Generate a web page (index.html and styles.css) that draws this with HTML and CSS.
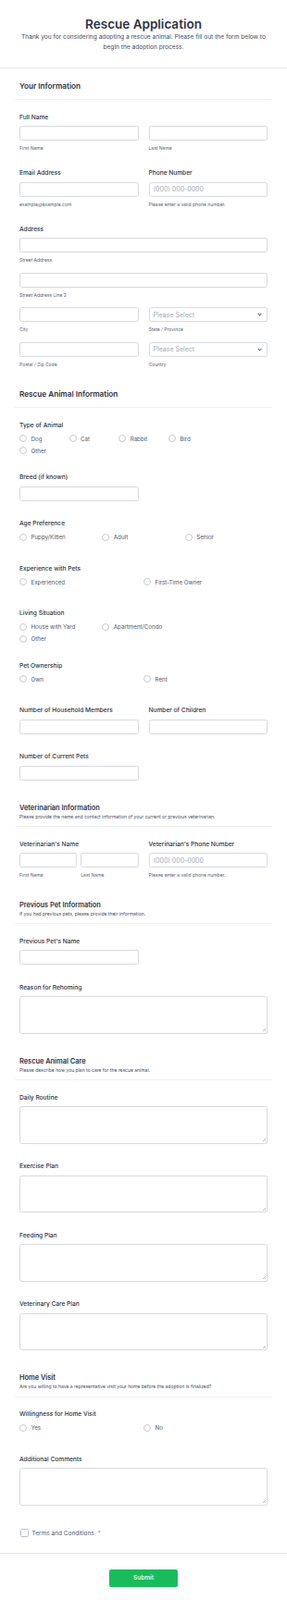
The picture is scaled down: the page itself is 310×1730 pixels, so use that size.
FILE: index.html
```html
<!DOCTYPE html>
<html lang="en">
<head>
    <meta charset="UTF-8">
    <meta name="viewport" content="width=device-width, initial-scale=1.0">
    <title>Rescue Application</title>
    <link rel="stylesheet" href="styles.css">
</head>
<body>

    <header class="form-header">
        <h1>Rescue Application</h1>
        <p>Thank you for considering adopting a rescue animal. Please fill out the form below to begin the adoption process.</p>
    </header>

    <form class="form" id="rescueForm">

        <!-- Your Information -->
        <div class="section-head first">
            <h2>Your Information</h2>
        </div>

        <div class="field with-sub">
            <label class="label">Full Name</label>
            <div class="pair">
                <div><input type="text"><span class="sub">First Name</span></div>
                <div><input type="text"><span class="sub">Last Name</span></div>
            </div>
        </div>

        <div class="field with-sub pair">
            <div>
                <label class="label">Email Address</label>
                <input type="email">
                <span class="sub">example@example.com</span>
            </div>
            <div>
                <label class="label">Phone Number</label>
                <input type="tel" placeholder="(000) 000-0000">
                <span class="sub">Please enter a valid phone number.</span>
            </div>
        </div>

        <div class="field with-sub">
            <label class="label">Address</label>
            <div class="part">
                <input type="text"><span class="sub">Street Address</span>
            </div>
            <div class="part">
                <input type="text"><span class="sub">Street Address Line 2</span>
            </div>
            <div class="part pair">
                <div><input type="text"><span class="sub">City</span></div>
                <div>
                    <div class="select-wrap">
                        <select><option value="">Please Select</option></select>
                    </div>
                    <span class="sub">State / Province</span>
                </div>
            </div>
            <div class="part pair">
                <div><input type="text"><span class="sub">Postal / Zip Code</span></div>
                <div>
                    <div class="select-wrap">
                        <select><option value="">Please Select</option></select>
                    </div>
                    <span class="sub">Country</span>
                </div>
            </div>
        </div>

        <!-- Rescue Animal Information -->
        <div class="section-head">
            <h2>Rescue Animal Information</h2>
        </div>

        <div class="field choice two-rows">
            <label class="label">Type of Animal</label>
            <div class="choices cols-4">
                <label class="opt"><input type="radio" name="animal">Dog</label>
                <label class="opt"><input type="radio" name="animal">Cat</label>
                <label class="opt"><input type="radio" name="animal">Rabbit</label>
                <label class="opt"><input type="radio" name="animal">Bird</label>
                <label class="opt"><input type="radio" name="animal">Other</label>
            </div>
        </div>

        <div class="field">
            <label class="label">Breed (if known)</label>
            <input type="text" class="half">
        </div>

        <div class="field choice">
            <label class="label">Age Preference</label>
            <div class="choices cols-3">
                <label class="opt"><input type="radio" name="age">Puppy/Kitten</label>
                <label class="opt"><input type="radio" name="age">Adult</label>
                <label class="opt"><input type="radio" name="age">Senior</label>
            </div>
        </div>

        <div class="field choice">
            <label class="label">Experience with Pets</label>
            <div class="choices cols-2">
                <label class="opt"><input type="radio" name="experience">Experienced</label>
                <label class="opt"><input type="radio" name="experience">First-Time Owner</label>
            </div>
        </div>

        <div class="field choice two-rows">
            <label class="label">Living Situation</label>
            <div class="choices cols-3">
                <label class="opt"><input type="radio" name="living">House with Yard</label>
                <label class="opt"><input type="radio" name="living">Apartment/Condo</label>
                <label class="opt new-row"><input type="radio" name="living">Other</label>
            </div>
        </div>

        <div class="field choice">
            <label class="label">Pet Ownership</label>
            <div class="choices cols-2">
                <label class="opt"><input type="radio" name="ownership">Own</label>
                <label class="opt"><input type="radio" name="ownership">Rent</label>
            </div>
        </div>

        <div class="field pair">
            <div>
                <label class="label">Number of Household Members</label>
                <input type="number">
            </div>
            <div>
                <label class="label">Number of Children</label>
                <input type="number">
            </div>
        </div>

        <div class="field">
            <label class="label">Number of Current Pets</label>
            <input type="number" class="half">
        </div>

        <!-- Veterinarian Information -->
        <div class="section-head with-desc">
            <h2>Veterinarian Information</h2>
            <p class="desc">Please provide the name and contact information of your current or previous veterinarian.</p>
        </div>

        <div class="field with-sub pair">
            <div>
                <label class="label">Veterinarian's Name</label>
                <div class="name-pair">
                    <div><input type="text"><span class="sub">First Name</span></div>
                    <div><input type="text"><span class="sub">Last Name</span></div>
                </div>
            </div>
            <div>
                <label class="label">Veterinarian's Phone Number</label>
                <input type="tel" placeholder="(000) 000-0000">
                <span class="sub">Please enter a valid phone number.</span>
            </div>
        </div>

        <!-- Previous Pet Information -->
        <div class="section-head with-desc">
            <h2>Previous Pet Information</h2>
            <p class="desc">If you had previous pets, please provide their information.</p>
        </div>

        <div class="field">
            <label class="label">Previous Pet's Name</label>
            <input type="text" class="half">
        </div>

        <div class="field">
            <label class="label">Reason for Rehoming</label>
            <textarea></textarea>
        </div>

        <!-- Rescue Animal Care -->
        <div class="section-head with-desc">
            <h2>Rescue Animal Care</h2>
            <p class="desc">Please describe how you plan to care for the rescue animal.</p>
        </div>

        <div class="field">
            <label class="label">Daily Routine</label>
            <textarea></textarea>
        </div>

        <div class="field">
            <label class="label">Exercise Plan</label>
            <textarea></textarea>
        </div>

        <div class="field">
            <label class="label">Feeding Plan</label>
            <textarea></textarea>
        </div>

        <div class="field">
            <label class="label">Veterinary Care Plan</label>
            <textarea></textarea>
        </div>

        <!-- Home Visit -->
        <div class="section-head with-desc">
            <h2>Home Visit</h2>
            <p class="desc">Are you willing to have a representative visit your home before the adoption is finalized?</p>
        </div>

        <div class="field choice">
            <label class="label">Willingness for Home Visit</label>
            <div class="choices cols-2">
                <label class="opt"><input type="radio" name="visit">Yes</label>
                <label class="opt"><input type="radio" name="visit">No</label>
            </div>
        </div>

        <div class="field">
            <label class="label">Additional Comments</label>
            <textarea></textarea>
        </div>

        <div class="field terms">
            <label class="check"><input type="checkbox">Terms and Conditions<span class="required">*</span></label>
        </div>
    </form>

    <div class="form-footer">
        <button type="submit" form="rescueForm">Submit</button>
    </div>

</body>
</html>
```

FILE: styles.css
```css
body {
    font-family: 'Inter', 'Noto Sans', sans-serif;
    background-color: #ffffff;
    color: #2c3345;
    margin: 0;
}

/* header */
.form-header {
    padding: 17px 20px 16px;
    text-align: center;
    border-bottom: 1px solid #e6e8ef;
}

.form-header h1 {
    margin: 0;
    font-size: 13.5px;
    line-height: 18px;
    font-weight: 600;
    color: #2c3345;
}

.form-header p {
    margin: 0;
    font-size: 6.6px;
    line-height: 11px;
    color: #454e62;
}

/* form body */
.form {
    display: flex;
    flex-direction: column;
    padding: 13px 21px 0;
}

.section-head {
    margin: 4.5px -5px 13.5px;
    padding: 0 5px 8px;
    border-bottom: 1px solid #eef0f4;
}

.section-head.first {
    margin-top: 0;
}

.section-head h2 {
    margin: 0;
    font-size: 8.2px;
    line-height: 12px;
    font-weight: 600;
    color: #2c3345;
}

.section-head.with-desc h2 {
    font-size: 7.4px;
}

.desc {
    margin: 0 0 -1.5px;
    font-size: 5px;
    line-height: 7px;
    color: #454e62;
}

.field {
    margin-bottom: 19.5px;
}

.field.with-sub {
    margin-bottom: 18px;
}

.field.choice {
    margin-bottom: 24px;
}

.field.choice.two-rows {
    margin-bottom: 19px;
}

.label {
    display: block;
    font-size: 6.6px;
    line-height: 10px;
    font-weight: 500;
    color: #2c3345;
    margin-bottom: 4.5px;
}

.pair {
    display: grid;
    grid-template-columns: 1fr 1fr;
    column-gap: 11px;
}

.name-pair {
    display: grid;
    grid-template-columns: 1fr 1fr;
    column-gap: 4px;
}

.part + .part {
    margin-top: 9.5px;
}

input[type="text"], input[type="email"], input[type="tel"], input[type="number"], select, textarea {
    display: block;
    width: 100%;
    height: 16px;
    margin: 0;
    padding: 0 4px;
    border: 1px solid #d6d9e4;
    border-radius: 2.5px;
    box-sizing: border-box;
    background-color: #ffffff;
    font-family: 'Inter', 'Noto Sans', sans-serif;
    font-size: 7px;
    color: #2c3345;
}

input[type="number"] {
    -moz-appearance: textfield;
}

input[type="number"]::-webkit-inner-spin-button {
    -webkit-appearance: none;
}

input::placeholder {
    color: #a4aab8;
}

input.half {
    width: calc(50% - 5.5px);
}

/* small drawn grip instead of the big native one */
textarea {
    height: 40.5px;
    resize: none;
    background-image: linear-gradient(135deg, transparent 0 55%, #b9bec9 55% 66%, transparent 66% 78%, #b9bec9 78% 89%, transparent 89%);
    background-size: 4px 4px;
    background-position: right 1.5px bottom 1.5px;
    background-repeat: no-repeat;
}

select {
    appearance: none;
    -webkit-appearance: none;
    color: #a4aab8;
}

.select-wrap {
    position: relative;
}

.select-wrap::after {
    content: "";
    position: absolute;
    right: 7px;
    top: 6px;
    width: 2px;
    height: 2px;
    border-right: 1px solid #57647e;
    border-bottom: 1px solid #57647e;
    transform: rotate(45deg);
}

.sub {
    display: block;
    margin-top: 4px;
    font-size: 5px;
    line-height: 8px;
    color: #57647e;
}

/* radio groups */
.choices {
    display: grid;
    row-gap: 3px;
}

.cols-4 {
    grid-template-columns: repeat(4, 53.6px);
}

.cols-3 {
    grid-template-columns: repeat(3, 1fr);
}

.cols-2 {
    grid-template-columns: repeat(2, 1fr);
}

.new-row {
    grid-column: 1;
}

.opt, .check {
    display: flex;
    align-items: center;
    height: 10px;
    font-size: 6.2px;
    color: #4f5a6e;
}

.opt input[type="radio"] {
    appearance: none;
    -webkit-appearance: none;
    width: 8px;
    height: 8px;
    margin: 0 4.5px 0 0;
    border: 1px solid #c5cad6;
    border-radius: 50%;
    background-color: #ffffff;
}

.field.terms {
    margin-top: 5.5px;
    margin-bottom: 16.5px;
}

.check {
    font-size: 6.5px;
}

.check input[type="checkbox"] {
    appearance: none;
    -webkit-appearance: none;
    width: 8.5px;
    height: 8.5px;
    margin: 0 4px 0 1px;
    border: 1px solid #b9bfcc;
    border-radius: 1.5px;
    background-color: #ffffff;
}

.required {
    color: #f23a3c;
    margin-left: 4px;
    font-size: 6px;
}

/* footer */
.form-footer {
    border-top: 1px solid #e6e8ef;
    padding: 12px 0 17px;
    text-align: center;
}

button {
    width: 74px;
    height: 19px;
    background-color: #18bd5b;
    color: white;
    border: none;
    border-radius: 2px;
    font-family: 'Inter', 'Noto Sans', sans-serif;
    font-size: 6.5px;
    font-weight: 500;
    cursor: pointer;
}

button:hover {
    background-color: #16a34a;
}
```
